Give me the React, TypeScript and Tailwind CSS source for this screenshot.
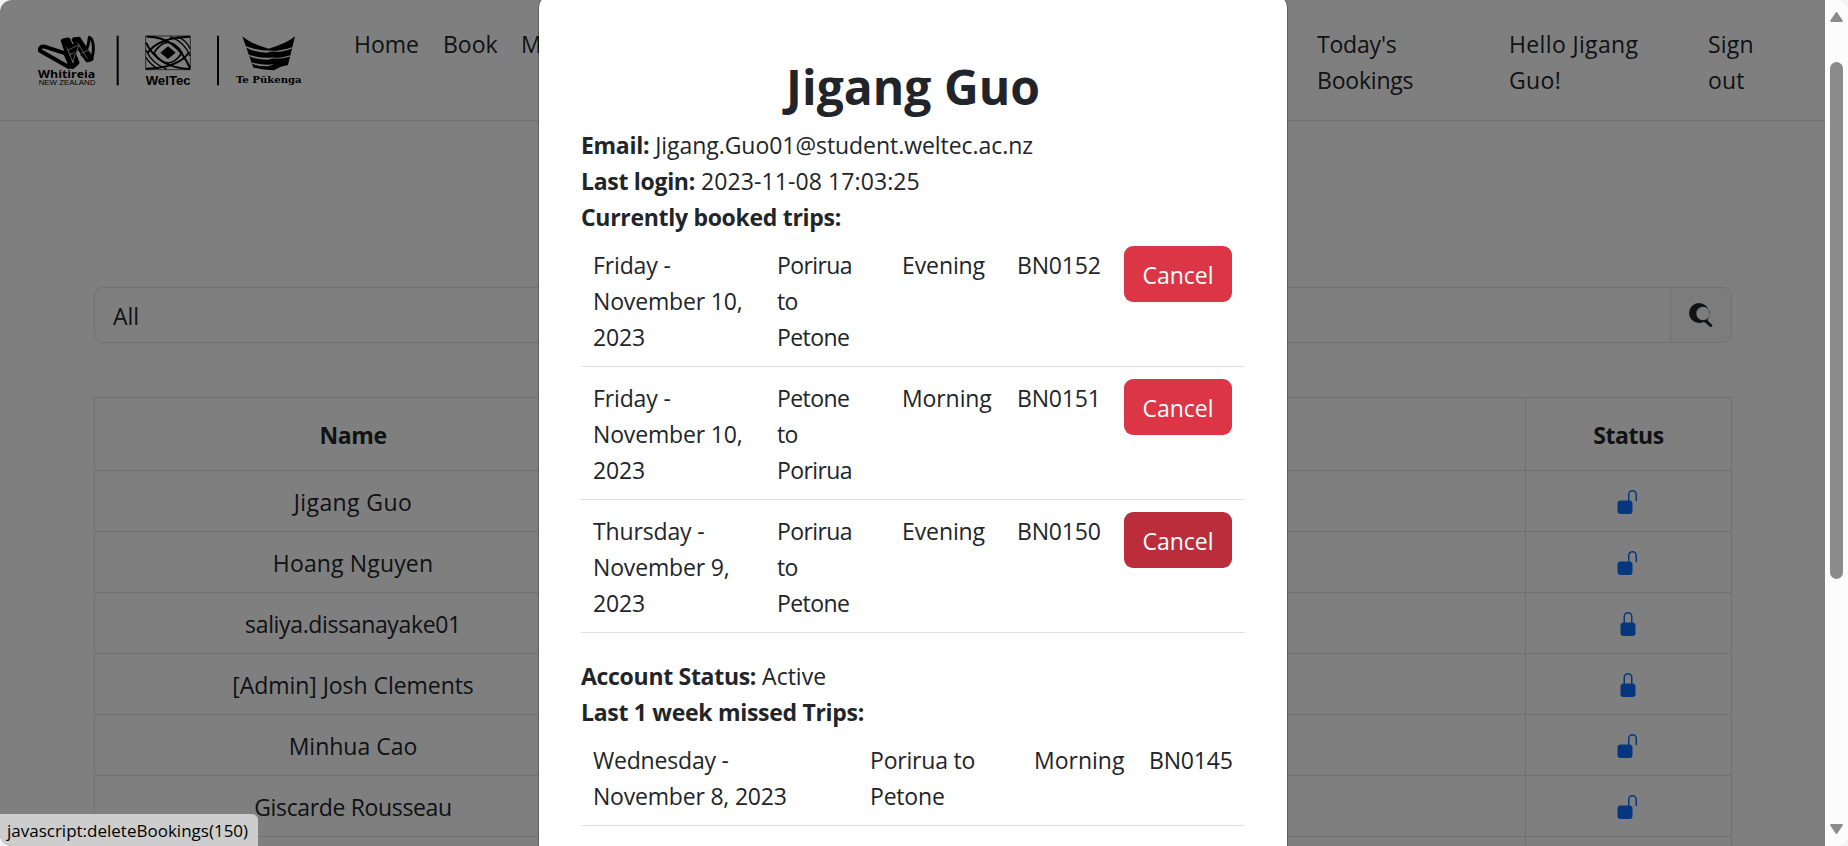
import type { ReactNode } from "react";
import { BsLockFill, BsUnlockFill } from "react-icons/bs";

const users = [
  { name: "Jigang Guo", locked: false, tracking: "tracking-[0.4px]" },
  { name: "Hoang Nguyen", locked: false, tracking: "tracking-[0.15px]" },
  { name: "saliya.dissanayake01", locked: true, tracking: "tracking-[-0.35px]" },
  { name: "[Admin] Josh Clements", locked: true, tracking: "tracking-[-0.05px]" },
  { name: "Minhua Cao", locked: false, tracking: "tracking-normal" },
  { name: "Giscarde Rousseau", locked: false, tracking: "tracking-[-0.35px]" },
  { name: "", locked: false, tracking: "" },
];

const booked = [
  { date: ["Friday -", "November 10,", "2023"], route: ["Porirua", "to", "Petone"], time: "Evening", id: "BN0152", active: false },
  { date: ["Friday -", "November 10,", "2023"], route: ["Petone", "to", "Porirua"], time: "Morning", id: "BN0151", active: false },
  { date: ["Thursday -", "November 9,", "2023"], route: ["Porirua", "to", "Petone"], time: "Evening", id: "BN0150", active: true },
];

function Lines({ items }: { items: string[] }) {
  return (
    <div className="whitespace-nowrap">
      {items.map((line) => (
        <div key={line}>{line}</div>
      ))}
    </div>
  );
}

function Logos() {
  return (
    <svg className="h-[54px] w-[272px]" viewBox="108 102 816 162" fill="#000">
      <g fill="none" stroke="#000" strokeLinejoin="round" strokeLinecap="round">
        <path strokeWidth="12" d="M120 152 Q118 138 134 140 L196 160 L212 196 L206 201 Z" />
        <path strokeWidth="15" d="M190 123 L204 120 L231 188 L217 200 Z" />
        <path strokeWidth="14" d="M222 119 L236 117 L274 176 L262 180 Z" />
        <path strokeWidth="9" d="M268 112 Q281 116 280 150 Q278 176 270 180 L246 164 Q264 156 268 112 Z" />
        <path strokeWidth="13" d="M238 122 L208 194 M204 146 L236 130" />
      </g>
      <g stroke="#fff" strokeWidth="2" fill="none">
        <path d="M200 142 L220 190 M232 128 L262 176 M238 134 L216 188 M204 150 L234 136 M208 164 L224 158 M244 160 L266 150" />
      </g>
      <text x="114" y="235" fontSize="29" fontWeight="700" textLength="172" lengthAdjust="spacingAndGlyphs" fontFamily="Open Sans, sans-serif">Whitireia</text>
      <text x="116" y="255" fontSize="21" textLength="170" lengthAdjust="spacingAndGlyphs" fontFamily="Liberation Sans, sans-serif">NEW ZEALAND</text>
      <rect x="350" y="107" width="6" height="149" />
      <rect x="651" y="107" width="6" height="149" />
      <g fill="none" stroke="#000">
        <path strokeWidth="2" d="M437 108 H571 V209 H437 Z" />
        <g strokeWidth="6">
          <path d="M442 160 Q474 112 570 110" />
          <path d="M438 206 Q536 204 568 156" />
          <path d="M440 110 Q528 108 570 204" />
          <path d="M438 128 Q474 204 570 207" />
        </g>
        <path strokeWidth="5" d="M462 158 Q504 96 546 158 Q504 220 462 158 Z" />
        <path strokeWidth="4" d="M438 150 Q456 192 500 207 M438 172 Q450 194 476 207 M510 110 Q556 128 570 168 M534 110 Q560 122 570 146" />
      </g>
      <path d="M504 139 L527 158 L504 177 L481 158 Z" />
      <text x="437" y="255" fontSize="38" fontWeight="700" textLength="135" lengthAdjust="spacingAndGlyphs" fontFamily="Liberation Sans, sans-serif">WelTec</text>
      <path d="M727 109 Q750 130 806 146 Q861 130 885 109 L864 195 Q842 198 822 211 Q790 210 760 203 Z" />
      <g fill="#fff">
        <path d="M737 138 Q776 154 824 152 L800 158 Q762 156 739 143 Z" />
        <path d="M746 164 Q782 176 828 172 L804 179 Q770 179 748 169 Z" />
        <path d="M755 187 Q786 197 822 193 L804 199 Q776 200 757 191 Z" />
        <path d="M876 142 Q850 151 812 155 Q850 157 875 146 Z" />
        <path d="M870 166 Q846 174 812 176 Q846 178 869 170 Z" />
      </g>
      <text x="708" y="249" fontSize="30" fontWeight="700" textLength="197" lengthAdjust="spacingAndGlyphs" fontFamily="DejaVu Serif, serif">Te Pūkenga</text>
    </svg>
  );
}

function SearchIcon() {
  return (
    <svg className="size-6" viewBox="0 0 24 24" fill="#212529">
      <path fillRule="evenodd" d="M10 0a10 10 0 1 0 0 20a10 10 0 0 0 4.500-1.100l1.600 .5l5.700 5.100l1.800-2l-5.200-5.400a9.500 9.500 0 0 0 1.600-8.100A10 10 0 0 0 10 0ZM14 3.800a6.700 6.700 0 1 1 0 13.400a6.700 6.700 0 0 1 0-13.400Z" />
    </svg>
  );
}

function CancelButton({ active }: { active: boolean }) {
  return (
    <button className={`flex h-14 w-[108px] items-center justify-center rounded-[9px] pt-0.5 text-white ${active ? "bg-[#bb2d3b]" : "bg-[#dc3545]"}`}>
      Cancel
    </button>
  );
}

function Field({ label, children }: { label: string; children?: ReactNode }) {
  return (
    <div className="flex gap-[6px] whitespace-nowrap">
      <b className="tracking-[-0.3px]">{label}</b>
      <span>{children}</span>
    </div>
  );
}

function Page() {
  return (
    <div className="h-full w-full bg-white">
      <header className="flex h-[121px] items-start border-b border-[#dee2e6] pl-9 pt-[26px]">
        <div className="mt-2 w-[318px]">
          <Logos />
        </div>
        <nav className="flex flex-1 whitespace-nowrap">
          <span className="w-[89px]">Home</span>
          <span className="w-[78px]">Book</span>
          <span className="w-[796px]">My Bookings</span>
          <span className="w-[192px] tracking-[-0.2px]">Today's<br />Bookings</span>
          <span className="w-[199px] tracking-[0.35px]">Hello Jigang<br />Guo!</span>
          <span className="tracking-[0.2px]">Sign<br />out</span>
        </nav>
      </header>
      <main className="pl-[94px] pt-[166px]">
        <div className="flex h-14 w-[1638px] overflow-hidden rounded-[9px] border border-[#dee2e6]">
          <div className="flex flex-1 items-center pl-[18px] pt-0.5">All</div>
          <div className="flex w-[61px] items-center justify-center border-l border-[#dee2e6] bg-[#f8f9fa]">
            <SearchIcon />
          </div>
        </div>
        <div className="mt-[54px] w-[1638px] border-l border-t border-[#dee2e6] text-center">
          <div className="flex h-[73px] border-b border-[#dee2e6] font-bold leading-[73px] tracking-[-0.4px]">
            <div className="w-[517px] border-r border-[#dee2e6] pt-px">Name</div>
            <div className="flex-1 border-r border-[#dee2e6]" />
            <div className="w-[206px] border-r border-[#dee2e6] pt-px">Status</div>
          </div>
          {users.map((user, i) => (
            <div key={i} className="flex h-[61px] border-b border-[#dee2e6] leading-[60px]">
              <div className={`w-[517px] border-r border-[#dee2e6] pt-px ${user.tracking}`}>{user.name}</div>
              <div className="flex-1 border-r border-[#dee2e6]" />
              <div className="flex w-[206px] items-center justify-center border-r border-[#dee2e6] pr-px pt-0.5 text-[24px] text-[#0d6efd]">
                {user.locked ? <BsLockFill /> : <BsUnlockFill />}
              </div>
            </div>
          ))}
        </div>
      </main>
    </div>
  );
}

function Dialog() {
  return (
    <div className="-mt-[5px] ml-px h-[900px] w-[750px] rounded-[12px] border border-black/25 bg-white bg-clip-padding px-[42px] pt-[62px]">
      <h1 className="h-[69px] text-center text-[48px] font-bold leading-[58px]">Jigang Guo</h1>
      <Field label="Email:">
        <span className="tracking-[-0.05px]">Jigang.Guo01@student.weltec.ac.nz</span>
      </Field>
      <Field label="Last login:">
        <span className="tracking-[0.1px]">2023-11-08 17:03:25</span>
      </Field>
      <Field label="Currently booked trips:" />
      <div className="-mt-px mb-6">
        {booked.map((trip) => (
          <div key={trip.id} className="grid h-[133px] grid-cols-[184px_125px_115px_107px_108px] border-b border-[#dee2e6] pl-3 pt-3">
            <div className="pt-px tracking-[-0.15px]"><Lines items={trip.date} /></div>
            <div className="pt-px tracking-[-0.6px]"><Lines items={trip.route} /></div>
            <div className="pt-px tracking-[-0.1px]">{trip.time}</div>
            <div className="pt-px tracking-[-0.2px]">{trip.id}</div>
            <CancelButton active={trip.active} />
          </div>
        ))}
      </div>
      <div className="pt-px">
        <Field label="Account Status:">Active</Field>
        <Field label="Last 1 week missed Trips:" />
      </div>
      <div className="grid h-24 grid-cols-[277px_164px_115px_96px] border-b border-[#dee2e6] pl-3 pt-3 tracking-[-0.2px]">
        <Lines items={["Wednesday -", "November 8, 2023"]} />
        <Lines items={["Porirua to", "Petone"]} />
        <div className="tracking-normal">Morning</div>
        <div>BN0145</div>
      </div>
    </div>
  );
}

export default function App() {
  return (
    <div className="relative flex h-[846px] w-[1848px] overflow-hidden bg-[#f3f3f3] font-['Open_Sans',sans-serif] text-[23px] leading-[36px] text-[#212529]">
      <div className="relative h-full w-[1825px] overflow-hidden rounded-l-[12px]">
        <Page />
        <div className="absolute inset-0 flex justify-center bg-black/50">
          <Dialog />
        </div>
        <div className="absolute bottom-0 left-0 h-8 w-[258px] rounded-tr-[6px] bg-[#cdcdcd] pl-[7px] text-[17px] leading-[34px] text-black">
          javascript:deleteBookings(150)
        </div>
      </div>
      <div className="flex h-full w-[23px] flex-col items-center rounded-r-[12px] bg-[#fcfcfc] pr-[1px]">
        <svg className="mt-3 h-[10px] w-[13px]" viewBox="0 0 13 10" fill="#8b8b8b">
          <path d="M5.500 .8Q6.500-.6 7.500 .8L12.700 8.500Q13 10 12 10H1Q0 10 .3 8.500Z" />
        </svg>
        <div className="mt-10 h-[517px] w-[13px] rounded-full bg-[#8b8b8b]" />
        <svg className="mt-[245px] h-[10px] w-[13px]" viewBox="0 0 13 10" fill="#8b8b8b">
          <path d="M5.500 9.200Q6.500 10.600 7.500 9.200L12.700 1.500Q13 0 12 0H1Q0 0 .3 1.500Z" />
        </svg>
      </div>
    </div>
  );
}
